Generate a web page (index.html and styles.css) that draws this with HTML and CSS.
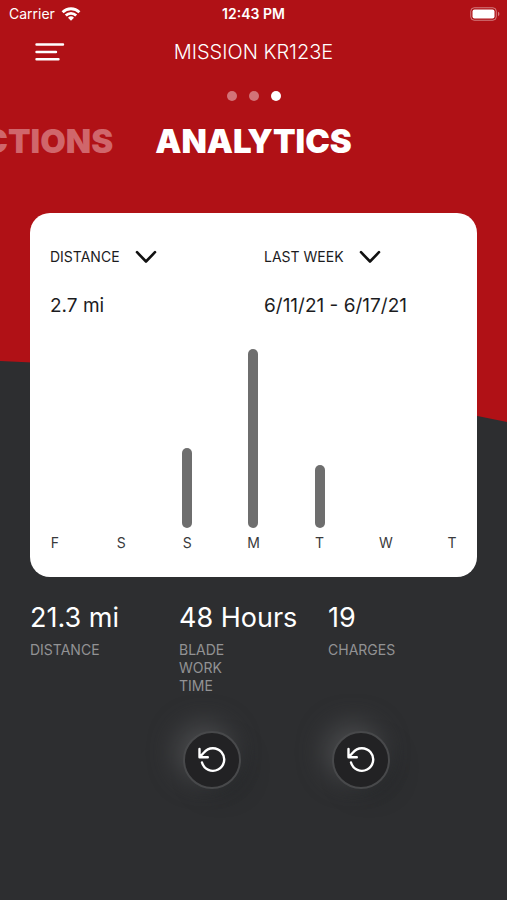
FILE: index.html
```html
<!DOCTYPE html>
<html lang="en">
<head>
<meta charset="utf-8">
<meta name="viewport" content="width=device-width, initial-scale=1">
<title>Mission KR123E</title>
<link rel="stylesheet" href="styles.css">
</head>
<body>
<div class="screen">
  <svg class="backdrop" viewBox="0 0 507 430" preserveAspectRatio="none" aria-hidden="true">
    <path d="M0 0H507V422Q270 371 0 361Z"/>
  </svg>

  <div class="status">
    <div class="carrier">
      <span>Carrier</span>
      <svg width="20" height="14" viewBox="0 0 20 14" fill="none" stroke="#fff" stroke-width="2.8" aria-hidden="true">
        <path d="M1.6 5.2a12 12 0 0 1 16.8 0"/>
        <path d="M4.8 8.6a7.4 7.4 0 0 1 10.4 0"/>
        <path d="M10 13.8 7 10.8a4.3 4.3 0 0 1 6 0Z" fill="#fff" stroke="none"/>
      </svg>
    </div>
    <span class="clock">12:43 PM</span>
    <svg class="battery" width="31" height="14" viewBox="0 0 31 14" aria-hidden="true">
      <rect x=".75" y=".75" width="25.5" height="12.5" rx="3.5" fill="none" stroke="#fff" stroke-opacity=".45"/>
      <rect x="2.5" y="2.5" width="22" height="9" rx="2" fill="#fff"/>
      <path d="M28 4.8a2.4 2.4 0 0 1 0 4.4Z" fill="#fff" fill-opacity=".45"/>
    </svg>
  </div>

  <header class="topbar">
    <button class="menu" type="button" aria-label="Menu">
      <svg width="30" height="20" viewBox="0 0 30 20" stroke="#fff" stroke-width="2.4" stroke-linecap="round" aria-hidden="true">
        <path d="M1.5 2.5H28M1.5 10H21M1.5 17.3H23.5"/>
      </svg>
    </button>
    <h1>MISSION KR123E</h1>
  </header>

  <div class="dots" aria-hidden="true">
    <span class="dot"></span><span class="dot"></span><span class="dot active"></span>
  </div>

  <nav class="tabs">
    <a class="tab previous" href="#actions">ACTIONS</a>
    <a class="tab" href="#analytics" aria-current="page">ANALYTICS</a>
  </nav>

  <main id="analytics">
    <section class="card">
      <div class="filters">
        <div class="filter">
          <label class="picker">
            <select aria-label="Measure"><option>DISTANCE</option></select>
            <svg width="22" height="14" viewBox="0 0 22 14" aria-hidden="true"><path d="M2 2.2 11 11.5 20 2.2"/></svg>
          </label>
          <p>2.7 mi</p>
        </div>
        <div class="filter">
          <label class="picker">
            <select aria-label="Period"><option>LAST WEEK</option></select>
            <svg width="22" height="14" viewBox="0 0 22 14" aria-hidden="true"><path d="M2 2.2 11 11.5 20 2.2"/></svg>
          </label>
          <p>6/11/21 - 6/17/21</p>
        </div>
      </div>
      <div class="chart">
        <div class="day"><div class="plot"></div><span>F</span></div>
        <div class="day"><div class="plot"></div><span>S</span></div>
        <div class="day"><div class="plot"><div class="bar" style="height:44.5%"></div></div><span>S</span></div>
        <div class="day"><div class="plot"><div class="bar" style="height:100%"></div></div><span>M</span></div>
        <div class="day"><div class="plot"><div class="bar" style="height:35%"></div></div><span>T</span></div>
        <div class="day"><div class="plot"></div><span>W</span></div>
        <div class="day"><div class="plot"></div><span>T</span></div>
      </div>
    </section>

    <section class="stats">
      <div class="stat">
        <strong>21.3 mi</strong>
        <span>DISTANCE</span>
      </div>
      <div class="stat">
        <strong>48 Hours</strong>
        <span>BLADE WORK TIME</span>
        <button class="reset" type="button" aria-label="Reset blade work time">
          <svg width="30" height="28" viewBox="0 0 30 28" aria-hidden="true"><path d="M2.5 3V11.2H10.8M3 10.8 7 6.5A11.3 11.3 0 1 1 5 16.5"/></svg>
        </button>
      </div>
      <div class="stat">
        <strong>19</strong>
        <span>CHARGES</span>
        <button class="reset" type="button" aria-label="Reset charges">
          <svg width="30" height="28" viewBox="0 0 30 28" aria-hidden="true"><path d="M2.5 3V11.2H10.8M3 10.8 7 6.5A11.3 11.3 0 1 1 5 16.5"/></svg>
        </button>
      </div>
    </section>
  </main>
</div>
</body>
</html>
```

FILE: styles.css
```css
* { box-sizing: border-box; }

body {
  margin: 0;
  background: #2d2e30;
  color: #fff;
  font-family: Inter, "Liberation Sans", sans-serif;
}

h1, p { margin: 0; font-weight: 400; }

button { padding: 0; border: 0; background: none; }

svg { display: block; flex: none; }

.screen {
  position: relative;
  min-height: 100vh;
  overflow: hidden;
  isolation: isolate;
}

.backdrop {
  position: absolute;
  z-index: -1;
  top: 0;
  left: 0;
  width: 100%;
  height: 430px;
  fill: #b01116;
}

.status {
  display: grid;
  grid-template-columns: 1fr auto 1fr;
  align-items: center;
  height: 28px;
  padding: 0 6px 1px;
  font-size: 14px;
}

.carrier { display: flex; align-items: center; gap: 6px; padding-left: 3px; }
.clock { font-weight: 600; }
.battery { justify-self: end; }

.topbar {
  display: grid;
  grid-template-columns: 1fr auto 1fr;
  align-items: center;
  height: 48px;
  padding: 0 35px;
}

.topbar h1 { font-size: 20px; font-weight: 300; }
.menu { justify-self: start; }

.dots {
  display: flex;
  justify-content: center;
  gap: 12px;
  padding: 15px 0 20px;
}

.dot {
  width: 10px;
  height: 10px;
  border-radius: 50%;
  background: #d27378;
}

.dot.active { background: #fff; }

.tabs {
  display: grid;
  grid-template-columns: 1fr auto 1fr;
  height: 40px;
  align-items: center;
}

.tab {
  color: #fff;
  font-size: 33px;
  font-weight: 900;
  text-decoration: none;
}

.tab.previous {
  display: flex;
  justify-content: flex-end;
  min-width: 0;
  padding-right: 42px;
  color: #d0666b;
}

main { padding: 52px 30px 40px; }

.card {
  padding: 32px 20px 24px;
  border-radius: 20px;
  background: #fff;
  color: #1c1c1e;
}

.filters { display: grid; grid-template-columns: 214px 1fr; }

.filter p { margin-top: 24px; font-size: 19px; line-height: 26px; }

.picker { display: flex; align-items: center; gap: 15px; height: 24px; }

.picker select {
  appearance: none;
  field-sizing: content;
  padding: 0;
  border: 0;
  background: none;
  color: #1c1c1e;
  font: 400 14px/24px Inter, "Liberation Sans", sans-serif;
}

.picker path {
  fill: none;
  stroke: #111;
  stroke-width: 2.6;
  stroke-linecap: round;
  stroke-linejoin: round;
}

.chart {
  display: flex;
  justify-content: space-between;
  margin-top: 30px;
}

.day {
  display: flex;
  flex-direction: column;
  align-items: center;
  gap: 5px;
  width: 10px;
  color: #3a3a3c;
  font-size: 14px;
  line-height: 20px;
}

.plot { display: flex; align-items: flex-end; height: 179px; }
.bar { width: 10px; border-radius: 5px; background: #6e6e6e; }

.stats {
  display: grid;
  grid-template-columns: repeat(3, 1fr);
  margin-top: 24px;
}

.stat {
  display: grid;
  grid-template-rows: 34px 54px auto;
  row-gap: 6px;
  justify-items: start;
}

.stat strong {
  font-size: 27px;
  font-weight: 400;
  line-height: 34px;
  white-space: nowrap;
}

.stat span {
  max-width: 80px;
  color: #929294;
  font-size: 14px;
  line-height: 18px;
}

.reset {
  display: grid;
  place-items: center;
  width: 58px;
  height: 58px;
  margin: 30px 0 0 4px;
  border: 2px solid #48494b;
  border-radius: 50%;
  background: #222224;
  box-shadow: -8px -8px 26px #48494b, 8px 8px 18px #27292b;
}

.reset path {
  fill: none;
  stroke: #fff;
  stroke-width: 2.4;
  stroke-linecap: round;
  stroke-linejoin: round;
}
```
